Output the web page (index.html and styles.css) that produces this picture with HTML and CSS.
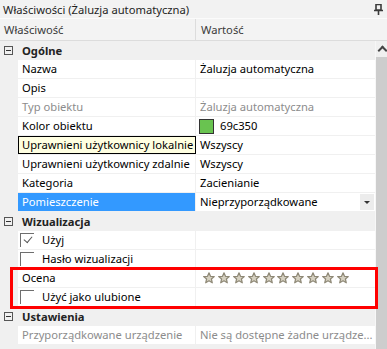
FILE: index.html
```html
<!DOCTYPE html>
<html lang="pl">
<head>
    <meta charset="UTF-8">
    <title>Właściwości</title>
    <link rel="stylesheet" href="styles.css">
</head>
<body>
    <svg width="0" height="0" class="defs">
        <symbol id="star" viewBox="0 0 12 12">
            <path d="M6 0.8 L7.5 4.3 L11.3 4.5 L8.4 7 L9.3 10.8 L6 8.8 L2.7 10.8 L3.6 7 L0.7 4.5 L4.5 4.3 Z" fill="#d6d1c1" stroke="#8e8876" stroke-width="1.2" stroke-linejoin="round"/>
        </symbol>
    </svg>

    <div class="panel">
        <div class="title">
            <span>Właściwości (Żaluzja automatyczna)</span>
            <svg class="pin" width="9" height="11" viewBox="0 0 9 11">
                <path d="M2 0.5 H7 V6 H2 Z M0 6.5 H9 M4.5 7 V11" fill="none" stroke="#3a3a3a" stroke-width="1.6"/>
            </svg>
        </div>

        <div class="head">
            <div class="head-name">Właściwość</div>
            <div class="head-value">Wartość</div>
        </div>

        <div class="body">
            <div class="rows">
                <!-- Ogólne -->
                <div class="cat"><span class="toggle"></span>Ogólne</div>
                <div class="row"><div class="gutter"></div><div class="name">Nazwa</div><div class="value">Żaluzja automatyczna</div></div>
                <div class="row"><div class="gutter"></div><div class="name">Opis</div><div class="value"></div></div>
                <div class="row muted"><div class="gutter"></div><div class="name">Typ obiektu</div><div class="value">Żaluzja automatyczna</div></div>
                <div class="row"><div class="gutter"></div><div class="name">Kolor obiektu</div><div class="value"><span class="swatch"></span>69c350</div></div>
                <div class="row"><div class="gutter"></div><div class="name tip">Uprawnieni użytkownicy lokalnie</div><div class="value">Wszyscy</div></div>
                <div class="row"><div class="gutter"></div><div class="name">Uprawnieni użytkownicy zdalnie</div><div class="value">Wszyscy</div></div>
                <div class="row"><div class="gutter"></div><div class="name">Kategoria</div><div class="value">Zacienianie</div></div>
                <div class="row"><div class="gutter"></div><div class="name selected">Pomieszczenie</div><div class="value">Nieprzyporządkowane<span class="drop"></span></div></div>

                <!-- Wizualizacja -->
                <div class="cat"><span class="toggle"></span>Wizualizacja</div>
                <div class="row"><div class="gutter"></div><div class="name"><span class="check checked"></span>Użyj</div><div class="value"></div></div>
                <div class="row"><div class="gutter"></div><div class="name"><span class="check"></span>Hasło wizualizacji</div><div class="value"></div></div>
                <div class="highlight">
                    <div class="row"><div class="gutter"></div><div class="name">Ocena</div>
                        <div class="value stars">
                            <svg><use href="#star"/></svg><svg><use href="#star"/></svg><svg><use href="#star"/></svg><svg><use href="#star"/></svg><svg><use href="#star"/></svg><svg><use href="#star"/></svg><svg><use href="#star"/></svg><svg><use href="#star"/></svg><svg><use href="#star"/></svg><svg><use href="#star"/></svg>
                        </div>
                    </div>
                    <div class="row"><div class="gutter"></div><div class="name"><span class="check"></span>Użyć jako ulubione</div><div class="value"></div></div>
                </div>

                <!-- Ustawienia -->
                <div class="cat"><span class="toggle"></span>Ustawienia</div>
                <div class="row muted"><div class="gutter"></div><div class="name">Przyporządkowane urządzenie</div><div class="value">Nie są dostępne żadne urządze...</div></div>
            </div>

            <div class="scrollbar">
                <div class="scroll-up"></div>
                <div class="thumb"></div>
            </div>
        </div>
    </div>
</body>
</html>
```

FILE: styles.css
```css
* { box-sizing: border-box; margin: 0; padding: 0; }
body { background: #f0f0f0; font-family: 'Noto Sans', sans-serif; font-size: 11.2px; color: #000; }
.defs { position: absolute; }

.panel { width: 387px; height: 349px; display: flex; flex-direction: column; overflow: hidden; }

.title { height: 19px; padding: 0 3px; display: flex; align-items: center; justify-content: space-between; color: #1e1e1e; background: #f2f2f2; border-bottom: 1px solid #fbfbfb; }
.pin { margin-right: 1px; }

.head { height: 22px; display: flex; background: #f3f3f3; border-bottom: 1px solid #dcdcdc; color: #3a3a3a; }
.head-name { width: 196px; padding: 3px 0 0 4px; border-right: 1px solid #dcdcdc; }
.head-value { flex: 1; padding: 3px 0 0 5px; }

.body { flex: 1; display: flex; }
.rows { width: 375px; background: #f0f0f0; }

.cat { height: 19px; display: flex; align-items: center; font-weight: bold; color: #222; padding-left: 4px; }
.toggle { width: 9px; height: 9px; border: 1px solid #555; margin-right: 9px; position: relative; }
.toggle::after { content: ''; position: absolute; left: 1px; right: 1px; top: 3px; height: 1px; background: #333; }

.row { height: 19px; display: flex; border-bottom: 1px solid #f0f0f0; }
.gutter { width: 18px; }
.name { width: 177px; padding-left: 4px; line-height: 18px; background: #fff; white-space: nowrap; overflow: hidden; display: flex; align-items: center; }
.value { flex: 1; margin-left: 1px; padding-left: 4px; line-height: 18px; background: #fff; white-space: nowrap; overflow: hidden; display: flex; align-items: center; }
.muted .name, .muted .value { color: #8c8c8c; }

.tip { background: #ffffe1; border: 1px solid #000; padding-left: 3px; width: 178px; margin-right: -1px; position: relative; }
.selected { background: #3399ff; color: #fff; }

.swatch { width: 15px; height: 15px; background: #69c350; border: 1px solid #333; margin-right: 6px; margin-left: -1px; }

.drop { margin-left: auto; margin-right: 1px; width: 14px; height: 16px; background: #ececec; position: relative; }
.drop::after { content: ''; position: absolute; left: 4px; top: 7px; border-left: 3px solid transparent; border-right: 3px solid transparent; border-top: 3px solid #333; }

.check { width: 14px; height: 14px; border-top: 1px solid #6e6e6e; border-left: 1px solid #6e6e6e; margin: 0 8px 0 -2px; position: relative; }
.check.checked::after { content: ''; position: absolute; left: 3px; top: 2px; width: 7px; height: 4px; border-left: 1.5px solid #555; border-bottom: 1.5px solid #555; transform: rotate(-50deg); }

.stars { gap: 2.9px; padding-left: 7px; }
.stars svg { width: 12px; height: 12px; }

.highlight { position: relative; }
.highlight::after { content: ''; position: absolute; left: 10px; width: 362px; top: -2px; bottom: -2px; border: 3px solid #ff0000; }

.scrollbar { flex: 1; display: flex; flex-direction: column; border-left: 1px solid #f7f7f7; }
.scroll-up { height: 16px; background: #f0f0f0; position: relative; }
.scroll-up::after { content: ''; position: absolute; left: 3px; top: 6px; width: 5px; height: 5px; border-left: 2px solid #444; border-top: 2px solid #444; transform: rotate(45deg); }
.thumb { flex: 1; background: #cdcdcd; }
```
